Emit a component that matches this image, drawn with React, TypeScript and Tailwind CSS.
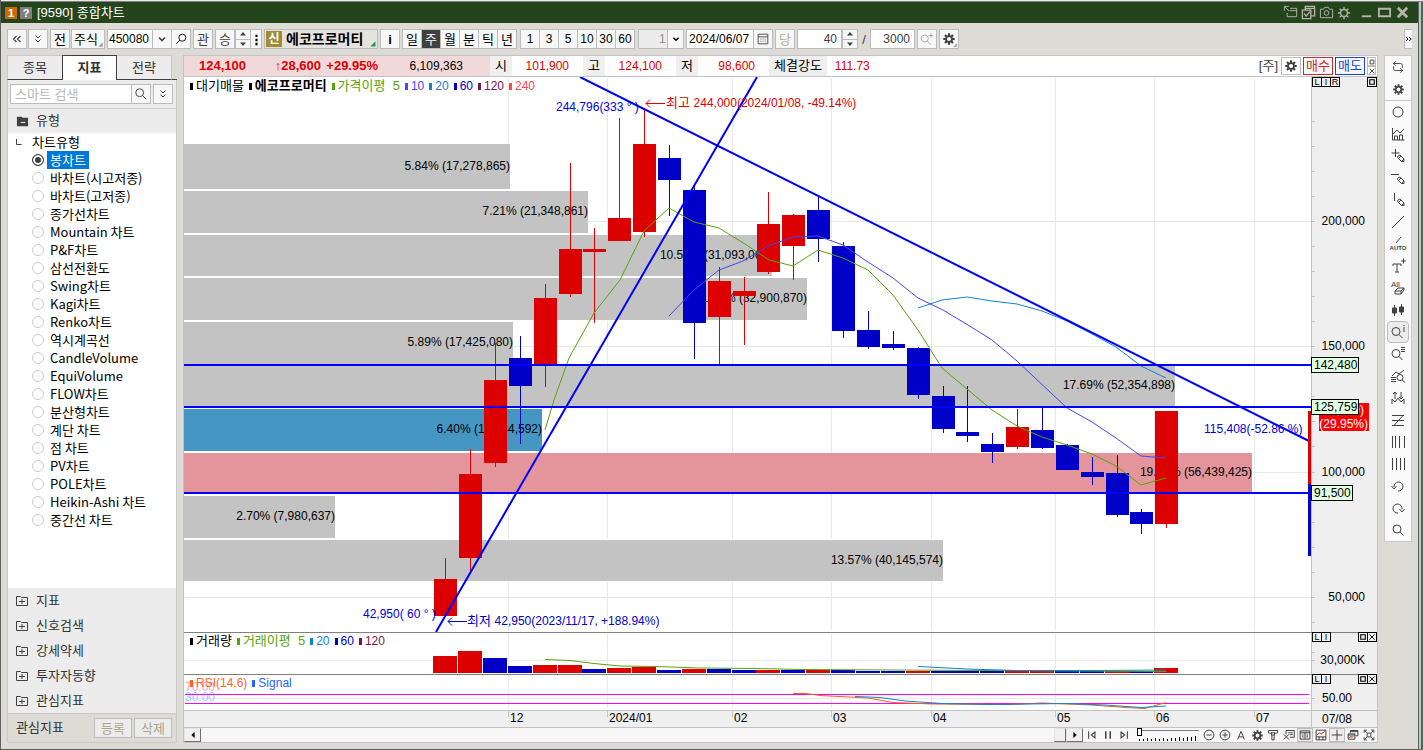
import { useState, type ReactNode } from "react";
import clsx from "clsx";

type IconProps = { d: string; size?: number; w?: number; className?: string; children?: ReactNode };

// 16x16 line icon
const Icon = ({ d, size = 16, w = 1, className, children }: IconProps) => (
  <svg
    width={size}
    height={size}
    viewBox="0 0 16 16"
    fill="none"
    stroke="currentColor"
    strokeWidth={w}
    className={clsx("shrink-0 overflow-visible", className)}
    aria-hidden
  >
    <path d={d} />
    {children}
  </svg>
);

const Gear = ({ size = 16, className }: { size?: number; className?: string }) => (
  <Icon d="M8 1.5v3M8 11.5v3M1.5 8h3M11.5 8h3M3.4 3.4l2 2M10.6 10.6l2 2M12.6 3.4l-2 2M5.4 10.6l-2 2" w={2.4} size={size} className={className}>
    <circle cx="8" cy="8" r="3.4" strokeWidth="2" />
  </Icon>
);

const PENCIL = "M8 8l2-1 4 4v2.500h-2.500l-4-4zM9 10l2-2M11.500 13.500l2.500-2.500";
const CHEVRON = "M5 6.500l3 3 3-3";
const DOUBLE_DOWN = "M5.500 4.500l2.500 2.500 2.500-2.500M5.500 8.500l2.500 2.500 2.500-2.500";
const MAG = "M10 10l4 4";

const box = "h-5 flex items-center justify-center bg-[#f7f7f7] border border-[#bcbcbc] shrink-0";

const chartTypes = [
  "봉차트",
  "바차트(시고저종)",
  "바차트(고저종)",
  "종가선차트",
  "Mountain 차트",
  "P&F차트",
  "삼선전환도",
  "Swing차트",
  "Kagi차트",
  "Renko차트",
  "역시계곡선",
  "CandleVolume",
  "EquiVolume",
  "FLOW차트",
  "분산형차트",
  "계단 차트",
  "점 차트",
  "PV차트",
  "POLE차트",
  "Heikin-Ashi 차트",
  "중간선 차트",
];

const categories = ["지표", "신호검색", "강세약세", "투자자동향", "관심지표"];

const Spinner = ({ label }: { label: string }) => (
  <div className="flex flex-col w-4 h-5 shrink-0 border border-[#bcbcbc] bg-[#f7f7f7] text-[#404040]">
    {["M8 4l6 7h-12z", "M8 12l6-7h-12z"].map((d, i) => (
      <button
        key={d}
        type="button"
        aria-label={`${label} ${i === 0 ? "+" : "-"}`}
        className={clsx("flex-1 flex items-center justify-center", i === 1 && "border-t border-[#bcbcbc]")}
      >
        <svg width="8" height="8" viewBox="0 0 16 16" fill="currentColor" aria-hidden>
          <path d={d} />
        </svg>
      </button>
    ))}
  </div>
);

const TitleBar = () => (
  <header className="h-[21px] bg-[#24451c] flex items-center justify-between pl-1 pr-2 text-white">
    <div className="flex items-center gap-[3px]">
      <span className="w-3 h-3 bg-[#c86a00] text-[11px] leading-3 font-bold text-center">1</span>
      <button type="button" className="w-3 h-3 bg-[#808080] text-[11px] leading-3 font-bold text-center">
        ?
      </button>
      <h1 className="text-[13px] leading-5 ml-[2px]">[9590] 종합차트</h1>
    </div>
    <div className="flex items-center gap-[3px] text-[#b4b4a8]">
      <button type="button" aria-label="이동">
        <Icon d="M1.500 6v-4.500h4.500M1.500 1.500l5 5M7.500 3.500h7v9h-10v-4M7 6h7.500" size={15} />
      </button>
      <button type="button" aria-label="복사">
        <Icon d="M1.500 5.500h9v9h-9zM4.500 5v-3.500h10v10h-4M4.500 3.500h10M3.500 9l2 3 4-5" size={15} w={1.4} />
      </button>
      <button type="button" aria-label="캡처">
        <Icon d="M1.500 4.500h3.500l1-2h4l1 2h3.500v9h-13z" size={15}>
          <circle cx="8" cy="8.500" r="2.500" />
        </Icon>
      </button>
      <button type="button" aria-label="설정">
        <Icon d="M8 1v2.500M8 12.500v2.500M1 8h2.500M12.500 8h2.500M3 3l2 2M11 11l2 2M13 3l-2 2M5 11l-2 2" size={14} w={1.6}>
          <circle cx="8" cy="8" r="4" />
        </Icon>
      </button>
      <button type="button" aria-label="최소화" className="ml-[5px]">
        <Icon d="M3 12h10" size={15} w={2} />
      </button>
      <button type="button" aria-label="최대화">
        <Icon d="M2 4h12v8h-12z" size={15} w={2} />
      </button>
      <button type="button" aria-label="닫기">
        <Icon d="M3 3l10 10M13 3l-10 10" size={15} w={3} />
      </button>
    </div>
  </header>
);

const Toolbar = () => {
  const [period, setPeriod] = useState("주");
  return (
    <div className="flex items-center justify-between py-[6px] px-[6px]">
      <div className="flex items-center gap-[2px] text-[13px] leading-none text-black">
        <div className="flex gap-px">
          <button type="button" aria-label="이전" className={clsx(box, "w-5 text-[#404040]")}>
            <Icon d="M7.500 5l-3 3 3 3M11.500 5l-3 3 3 3" w={1.2} />
          </button>
          <button type="button" aria-label="펼치기" className={clsx(box, "w-5 text-[#404040]")}>
            <Icon d={DOUBLE_DOWN} />
          </button>
        </div>
        <div className="flex gap-px">
          <button type="button" className={clsx(box, "w-5")}>전</button>
          <button type="button" className={clsx(box, "w-[34px] relative pr-1")}>
            주식
            <Icon d="M12 2v10h-10z" size={6} className="absolute right-0 bottom-0 text-[#999] fill-[#999]" />
          </button>
        </div>
        <div className="flex">
          <input aria-label="종목코드" defaultValue="450080" className="w-[46px] h-5 bg-white border border-[#bcbcbc] px-px text-[12px]" />
          <button type="button" aria-label="종목 목록" className={clsx(box, "w-5 -ml-px")}>
            <Icon d={CHEVRON} w={1.6} className="text-[#404040]" />
          </button>
          <button type="button" aria-label="종목 검색" className={clsx(box, "w-5 -ml-px")}>
            <Icon d="M6.500 9.500l-4 4" size={14}>
              <circle cx="9.500" cy="6.500" r="4" />
            </Icon>
          </button>
        </div>
        <button type="button" className={clsx(box, "w-5 text-[#404040]")}>관</button>
        <div className="flex">
          <button type="button" className={clsx(box, "w-5 text-[#404040]")}>승</button>
          <Spinner label="종목" />
          <button type="button" aria-label="더보기" className={clsx(box, "w-3 -ml-px")}>
            <Icon d="M8 2v3M8 7v3M8 12v3" w={2.6} size={13} />
          </button>
        </div>
        <button type="button" className="h-5 w-[114px] flex items-center gap-1 pl-px bg-[#e4e3df] border border-[#bcbcbc] font-bold text-[14px] relative">
          <span className="w-4 h-4 leading-4 bg-[#a08c32] text-white text-[12px]">신</span>
          에코프로머티
          <Icon d="M14 2v12h-12z" size={6} className="absolute right-px bottom-px text-[#14a050] fill-[#14a050]" />
        </button>
        <button type="button" className={clsx(box, "w-5 font-bold")}>i</button>
        <div className="flex">
          {["일", "주", "월", "분", "틱", "년"].map((p) => (
            <button
              key={p}
              type="button"
              onClick={() => setPeriod(p)}
              className={clsx(
                "h-5 w-5 -mr-px border border-[#bcbcbc] flex items-center justify-center",
                p === period ? "bg-[#404040] text-white" : "bg-[#f7f7f7]"
              )}
            >
              {p}
            </button>
          ))}
        </div>
        <div className="flex ml-[2px] text-[12px]">
          {["1", "3", "5", "10", "30", "60"].map((m) => (
            <button key={m} type="button" className={clsx(box, "w-5 -mr-px")}>
              {m}
            </button>
          ))}
        </div>
        <div className="relative ml-[2px]">
          <select aria-label="주기" className="appearance-none block w-[46px] h-5 border border-[#bcbcbc] bg-[#ececec] text-[12px] leading-4 text-[#909090] pl-5">
            <option>1</option>
          </select>
          <span className="absolute right-0 top-0 w-[17px] h-5 bg-[#f7f7f7] border border-[#bcbcbc] flex items-center justify-center pointer-events-none">
            <Icon d={CHEVRON} w={1.6} size={14} />
          </span>
        </div>
        <div className="flex">
          <input aria-label="날짜" defaultValue="2024/06/07" className="w-[68px] h-5 bg-white border border-[#bcbcbc] px-[2px] text-[12px]" />
          <button type="button" aria-label="달력" className={clsx(box, "w-5 -ml-px text-[#404040]")}>
            <Icon d="M2.500 2.500h11v11h-11zM2.500 5.500h11M5 8h1M7.500 8h1M10 8h1M5 10.500h1M7.500 10.500h1M10 10.500h1" size={14} />
          </button>
        </div>
        <button type="button" className={clsx(box, "w-5 text-[#b4b0a0]")}>당</button>
        <div className="flex">
          <input aria-label="표시 개수" defaultValue="40" className="w-[45px] h-5 bg-white border border-[#bcbcbc] px-1 text-right text-[12px] text-[#404040]" />
          <Spinner label="개수" />
        </div>
        <span className="w-2 text-center text-[#404040]">/</span>
        <input aria-label="전체 개수" defaultValue="3000" className="w-[45px] h-5 bg-white border border-[#bcbcbc] px-1 text-right text-[12px] text-[#404040]" />
        <button type="button" aria-label="확대 조회" className={clsx(box, "w-5 text-[#a0a0a0]")}>
          <Icon d="M8.500 10.500l4 4M10 4h5M12.500 1.500v5" size={14}>
            <circle cx="5.500" cy="7.500" r="4" />
          </Icon>
        </button>
        <button type="button" aria-label="차트 설정" className={clsx(box, "w-5 relative text-[#404040]")}>
          <Gear size={14} />
          <Icon d="M12 2v10h-10z" size={5} className="absolute right-0 bottom-0 text-[#999] fill-[#999]" />
        </button>
      </div>
      <button type="button" aria-label="도구 펼치기" className="w-2 h-5 border border-r-0 border-[#bcbcbc] bg-[#f7f7f7] flex items-center justify-center">
        <Icon d="M3.500 5l3 3-3 3M8.500 5l3 3-3 3" size={10} w={1.6} />
      </button>
    </div>
  );
};

const Sidebar = () => {
  const [type, setType] = useState("봉차트");
  return (
    <aside className="w-[170px] shrink-0 flex flex-col text-[13px] text-[#333]">
      <div className="flex h-[25px]">
        <button type="button" className="w-[55px] bg-[#ececec] border border-r-0 border-[#c8c8c8] border-b-[#404040]">종목</button>
        <button type="button" className="w-[55px] bg-white border border-b-0 border-[#404040] font-bold">지표</button>
        <button type="button" className="w-[55px] bg-[#ececec] border border-l-0 border-[#c8c8c8] border-b-[#404040]">전략</button>
        <span className="flex-1 border-b border-[#404040]" />
      </div>
      <div className="flex-1 flex flex-col border border-t-0 border-[#c8c8c8]">
        <div className="h-7 bg-[#ececec] flex items-center pl-[2px] pr-[3px]">
          <input aria-label="스마트 검색" placeholder="스마트 검색" className="w-[122px] h-5 bg-white border border-[#bcbcbc] px-1 placeholder:text-[#b8b8b8]" />
          <button type="button" aria-label="검색" className={clsx(box, "w-5 -ml-px")}>
            <Icon d={MAG} size={14}>
              <circle cx="6.500" cy="6.500" r="4.500" />
            </Icon>
          </button>
          <button type="button" aria-label="펼치기" className={clsx(box, "w-5 ml-[2px]")}>
            <Icon d={DOUBLE_DOWN} />
          </button>
        </div>
        <button type="button" className="h-[25px] bg-[#ececec] border-t border-[#d0d0d0] flex items-center gap-[7px] pl-2">
          <svg width="13" height="13" viewBox="0 0 14 14" aria-hidden>
            <path d="M1 2h5l1 1h6v9h-12z" fill="#404040" />
            <path d="M5 8h5" stroke="#fff" />
          </svg>
          유형
        </button>
        <div className="flex-1 bg-white text-black font-['Noto_Sans_CJK_KR',sans-serif]">
          <div className="h-[18px] flex items-center pl-2 gap-[10px]">
            <svg width="6" height="6" aria-hidden>
              <path d="M.5 0v5.500h5" stroke="#404040" fill="none" />
            </svg>
            차트유형
          </div>
          {chartTypes.map((t) => (
            <label key={t} className="h-[18px] flex items-center pl-6 gap-[3px]">
              <input
                type="radio"
                name="chartType"
                checked={t === type}
                onChange={() => setType(t)}
                className="appearance-none m-0 w-3 h-3 rounded-full border border-[#ccc] checked:border-[#404040] checked:bg-[#404040] checked:shadow-[inset_0_0_0_2px_white]"
              />
              <span className={clsx("px-[3px] leading-[18px]", t === type && "bg-[#0078d7] text-white")}>{t}</span>
            </label>
          ))}
        </div>
        <div className="bg-[#ececec] flex flex-col">
          {categories.map((c) => (
            <button key={c} type="button" className="h-[25px] flex items-center gap-2 pl-2">
              <svg width="12" height="12" viewBox="0 0 12 12" fill="none" stroke="#404040" aria-hidden>
                <path d="M.5 1.500h4l1 1h6v8h-11zM3 6.500h6M6 4v5" />
              </svg>
              {c}
            </button>
          ))}
        </div>
        <div className="h-[29px] border-t border-[#c8c8c8] bg-[#dcdbd5] flex items-center gap-[2px] pl-2 pr-1">
          <span className="flex-1">관심지표</span>
          <button type="button" className="w-[38px] h-5 bg-[#ececec] border border-[#bcbcbc] text-[#a8a490] leading-none">등록</button>
          <button type="button" className="w-[38px] h-5 bg-[#ececec] border border-[#bcbcbc] text-[#a8a490] leading-none">삭제</button>
        </div>
      </div>
    </aside>
  );
};

const QuoteCell = ({ label, value, last }: { label: string; value: string; last?: boolean }) => (
  <>
    <span className="bg-[#efefef] text-black text-[13px] px-[5px] min-w-[22px] text-center">{label}</span>
    <span className={clsx("text-[#dd0000]", last ? "pl-2" : "min-w-[71px] text-right pr-[14px]")}>{value}</span>
  </>
);

const QuoteBar = () => (
  <div className="h-[21px] border-b border-[#c3c3c3] bg-white flex justify-between text-[12px] leading-5">
    <div className="flex">
      <div className="bg-[#f2d9d9] w-[306px] flex text-[#dd0000]">
        <b className="w-[62px] text-right text-[13px]">124,100</b>
        <b className="w-[75px] text-right text-[13px]">↑28,600</b>
        <b className="w-[57px] text-right text-[13px]">+29.95%</b>
        <span className="w-[85px] text-right text-black">6,109,363</span>
      </div>
      <QuoteCell label="시" value="101,900" />
      <QuoteCell label="고" value="124,100" />
      <QuoteCell label="저" value="98,600" />
      <QuoteCell label="체결강도" value="111.73" last />
    </div>
    <div className="flex items-center gap-[2px] pr-px text-[#404040]">
      <span className="text-[13px]">[주]</span>
      <button type="button" aria-label="설정" className="w-5 h-[18px] ml-px border border-[#bcbcbc] flex items-center justify-center">
        <Gear size={14} />
      </button>
      <button type="button" className="w-[30px] h-[18px] border border-[#d02828] text-[#d02828] text-[13px] leading-4 bg-[#f7f7f7]">매수</button>
      <button type="button" className="w-[30px] h-[18px] border border-[#1c46d2] text-[#1c46d2] text-[13px] leading-4 bg-[#f7f7f7]">매도</button>
      <div className="flex flex-col">
        <button type="button" aria-label="최대화" className="w-[9px] h-[9px] border border-[#bcbcbc] flex items-center justify-center">
          <Icon d="M3 3h10v10h-10z" size={6} w={2.6} />
        </button>
        <button type="button" aria-label="닫기" className="w-[9px] h-[9px] border border-[#bcbcbc] flex items-center justify-center">
          <Icon d="M2 2l12 12M14 2l-12 12" size={6} w={2.6} />
        </button>
      </div>
    </div>
  </div>
);

const RED = "#dd0000";
const BLUE = "#0000c8";

// x, body top, body bottom, high, low, colour
const candles: [number, number, number, number, number, string][] = [
  [434, 579, 616, 558, 616, RED],
  [459, 474, 558, 449, 571, RED],
  [484, 380, 463, 343, 467, RED],
  [509, 358, 386, 336, 444, BLUE],
  [534, 298, 365, 284, 387, RED],
  [559, 249, 294, 163, 297, RED],
  [583, 249, 252, 228, 323, RED],
  [608, 218, 241, 118, 241, RED],
  [633, 144, 232, 109, 237, RED],
  [658, 158, 180, 145, 216, BLUE],
  [683, 190, 323, 186, 359, BLUE],
  [708, 281, 317, 267, 364, RED],
  [733, 291, 296, 277, 345, RED],
  [757, 224, 272, 192, 274, RED],
  [782, 215, 246, 214, 280, RED],
  [807, 210, 239, 196, 262, BLUE],
  [832, 246, 331, 242, 338, BLUE],
  [857, 330, 347, 311, 349, BLUE],
  [882, 344, 348, 331, 350, BLUE],
  [907, 348, 395, 347, 399, BLUE],
  [932, 396, 429, 386, 433, BLUE],
  [956, 432, 436, 386, 442, BLUE],
  [981, 444, 452, 433, 463, BLUE],
  [1006, 427, 447, 409, 449, RED],
  [1031, 430, 448, 407, 449, BLUE],
  [1056, 445, 470, 444, 470, BLUE],
  [1081, 472, 477, 457, 485, BLUE],
  [1106, 473, 515, 455, 517, BLUE],
  [1130, 512, 524, 509, 534, BLUE],
  [1155, 411, 524, 411, 528, RED],
];

const profile: [number, number, number, string, string][] = [
  [144, 189, 510, "5.84% (17,278,865)", "#c3c3c3"],
  [191, 233, 588, "7.21% (21,348,861)", "#c3c3c3"],
  [235, 276, 772, "10.51% (31,093,064)", "#c3c3c3"],
  [278, 320, 807, "11.12% (32,900,870)", "#c3c3c3"],
  [322, 364, 513, "5.89% (17,425,080)", "#c3c3c3"],
  [366, 406, 1175, "17.69% (52,354,898)", "#c3c3c3"],
  [409, 451, 542, "6.40% (18,934,592)", "#4696c4"],
  [453, 492, 1252, "19.07% (56,439,425)", "#e4949b"],
  [496, 538, 335, "2.70% (7,980,637)", "#c3c3c3"],
  [540, 581, 943, "13.57% (40,145,574)", "#c3c3c3"],
];

const volumes: [number, string][] = [
  [656, RED],
  [651, RED],
  [658, BLUE],
  [666, BLUE],
  [665, RED],
  [665, RED],
  [669, BLUE],
  [668, RED],
  [667, RED],
  [670, BLUE],
  [669, RED],
  [669, BLUE],
  [670, BLUE],
  [670, RED],
  [670, BLUE],
  [670, RED],
  [670, BLUE],
  [671, BLUE],
  [671, BLUE],
  [671, RED],
  [671, BLUE],
  [671, BLUE],
  [671, BLUE],
  [670, RED],
  [670, RED],
  [671, BLUE],
  [671, BLUE],
  [671, RED],
  [671, BLUE],
  [668, RED],
];

const months: [number, string][] = [
  [508, "12"],
  [607, "2024/01"],
  [732, "02"],
  [831, "03"],
  [931, "04"],
  [1055, "05"],
  [1154, "06"],
  [1254, "07"],
];

const prices: [number, string][] = [
  [221, "200,000"],
  [346, "150,000"],
  [472, "100,000"],
  [597, "50,000"],
];

const ma5 =
  "545,430 554,400 569,358 594,313 620,280 644,231 669,208 694,222 719,228 745,244 769,260 793,266 818,250 843,258 868,270 893,295 918,330 942,368 967,389 992,410 1017,426 1042,437 1067,445 1092,454 1116,466 1141,485 1166,478";
const ma10 =
  "669,316 694,290 719,270 743,261 768,246 793,237 818,236 843,245 868,262 893,278 918,298 943,310 968,325 992,340 1017,361 1067,408 1092,422 1116,438 1141,456 1166,458";
const ma20 =
  "918,308 942,300 967,297 992,301 1017,304 1042,311 1067,321 1092,334 1116,347 1141,366 1166,378";

const Grid = ({ top, bottom, rows }: { top: number; bottom: number; rows: number[] }) => (
  <g stroke="#e8e8e8" shapeRendering="crispEdges">
    {months.map(([x]) => (
      <path key={x} d={`M${x + 0.5} ${top + 1}V${bottom - 2}`} />
    ))}
    {rows.map((y) => (
      <path key={y} d={`M185 ${y + 0.5}H1311`} />
    ))}
  </g>
);

const Axis = ({ top, bottom, ticks }: { top: number; bottom: number; ticks: number[] }) => (
  <g shapeRendering="crispEdges">
    <rect x="1311" y={top} width="66" height={bottom - top} fill="#efefef" />
    <path d={`M1311.500 ${top}V${bottom}`} stroke="#c3c3c3" />
    {ticks.map((y) => (
      <path key={y} d={`M1312 ${y + 0.5}h3`} stroke="#c3c3c3" />
    ))}
  </g>
);

const Legend = ({ items }: { items: [string, string, boolean?][] }) => (
  <div className="absolute left-[6px] top-px flex gap-[5px] text-[12px] leading-4">
    {items.map(([text, color, bold]) => (
      <span
        key={text}
        style={{ color }}
        className={clsx("flex items-center gap-[3px] whitespace-pre", /[가-힣]/.test(text) && "text-[13px]", bold && "font-bold")}
      >
        <i style={{ backgroundColor: color }} className="w-[3px] h-[7px]" />
        {text}
      </span>
    ))}
  </div>
);

const tiny = "w-[10px] h-[10px] -mr-px border border-black text-[9px] leading-[8px] flex items-center justify-center text-black";

const PaneButtons = ({ left, close }: { left: string[]; close?: boolean }) => (
  <div className="absolute right-0 top-0 w-[65px] flex justify-between pr-px">
    <div className="flex">
      {left.map((l) => (
        <button key={l} type="button" className={tiny}>
          {l}
        </button>
      ))}
    </div>
    <div className="flex">
      <button type="button" aria-label="창 최대화" className={tiny}>
        <Icon d="M2 2h12v12h-12z" size={6} w={3} />
      </button>
      {close && (
        <button type="button" aria-label="창 닫기" className={tiny}>
          <Icon d="M1 1l14 14M15 1l-14 14" size={6} w={2.4} />
        </button>
      )}
    </div>
  </div>
);

const PriceTag = ({ y, w, text }: { y: number; w: number; text: string }) => (
  <g>
    <rect x="1311.500" y={y - 7.5} width={w} height="15" fill="#e2ffe2" stroke="#000" />
    <text x="1314" y={y + 4}>
      {text}
    </text>
  </g>
);

const PricePane = () => (
  <div className="relative">
    <svg viewBox="184 77 1193 555" className="block w-full h-auto text-[12px]" role="img" aria-label="가격 차트">
      <Grid top={77} bottom={632} rows={prices.map((p) => p[0])} />
      <g shapeRendering="crispEdges">
        {profile.map(([top, bottom, x, , fill]) => (
          <rect key={top} x="184" y={top} width={x - 184} height={bottom - top} fill={fill} stroke="#fff" strokeWidth="2" paintOrder="stroke" />
        ))}
      </g>
      {profile.map(([top, bottom, x, text]) => (
        <text key={top} x={x} y={Math.round((top + bottom) / 2) + 3} textAnchor="end">
          {text}
        </text>
      ))}
      <g shapeRendering="crispEdges">
        {candles.map(([x, top, bottom, high, low, fill]) => (
          <g key={x} fill={fill}>
            <rect x={x + 11} y={high} width="1" height={low - high} />
            <rect x={x} y={top} width="23" height={bottom - top} />
          </g>
        ))}
      </g>
      <g fill="none">
        <polyline points={ma5} stroke="#56a40a" />
        <polyline points={ma10} stroke="#4646f0" />
        <polyline points={ma20} stroke="#1482d2" />
      </g>
      <g stroke="#0000ff" strokeWidth="2">
        <path d="M184 365H1311M184 407H1311M184 493H1311" />
        <path d="M580 77L1311 442M436 632L757 77" />
      </g>
      <g fill="#0000dd">
        <text x="556" y="111">244,796(333 ° )</text>
        <text x="1204" y="433">115,408(-52.86 %)</text>
        <text x="363" y="618">42,950( 60 ° )</text>
      </g>
      <path d="M665 103.500h-19M650 99.500l-4 4 4 4" stroke={RED} fill="none" />
      <text x="666" y="107" fill={RED}>
        <tspan className="text-[13px]">최고 </tspan>
        244,000(2024/01/08, -49.14%)
      </text>
      <path d="M467 621.500h-19M452 617.500l-4 4 4 4" stroke={BLUE} fill="none" />
      <text x="467" y="625" fill={BLUE}>
        <tspan className="text-[13px]">최저 </tspan>
        42,950(2023/11/17, +188.94%)
      </text>
      <Axis top={77} bottom={632} ticks={[121, 146, 171, 196, 221, 246, 271, 296, 321, 346, 371, 396, 421, 446, 472, 497, 522, 547, 572, 597, 622]} />
      <rect x="1308" y="411" width="3" height="73" fill={RED} />
      <rect x="1308" y="484" width="3" height="72" fill={BLUE} />
      {prices.map(([y, text]) => (
        <text key={y} x="1365" y={y + 4} textAnchor="end">
          {text}
        </text>
      ))}
      <rect x="1319" y="403" width="50" height="28" fill="#ff0000" />
      <g fill="#fff">
        <text x="1364" y="414" textAnchor="end">(124,100)</text>
        <text x="1368" y="428" textAnchor="end">(29.95%)</text>
      </g>
      <PriceTag y={365} w={47} text="142,480" />
      <PriceTag y={407} w={47} text="125,759" />
      <PriceTag y={493} w={41} text="91,500" />
    </svg>
    <Legend
      items={[
        ["대기매물", "#000"],
        ["에코프로머티", "#000", true],
        ["가격이평  5", "#56a40a"],
        ["10", "#4646ff"],
        ["20", "#1482d2"],
        ["60", BLUE],
        ["120", "#781450"],
        ["240", "#ff4646"],
      ]}
    />
    <PaneButtons left={["L", "I", "R"]} />
  </div>
);

const VolumePane = () => (
  <div className="relative">
    <svg viewBox="184 632 1193 42" className="block w-full h-auto text-[12px]" role="img" aria-label="거래량 차트">
      <Grid top={633} bottom={674} rows={[660]} />
      <g shapeRendering="crispEdges">
        {volumes.map(([top, fill], i) => (
          <rect key={i} x={candles[i][0] - 1} y={top} width="24" height={673 - top} fill={fill} />
        ))}
      </g>
      <g fill="none">
        <polyline points="545,659.500 570,660.500 594,663.500 620,666 656,666.500 700,668 756,668.500 800,669.500 1166,671.500" stroke="#56a40a" />
        <polyline points="918,666.500 967,669 1017,670.500 1100,670.500 1166,670" stroke="#1482d2" />
      </g>
      <Axis top={632} bottom={674} ticks={[652, 660]} />
      <text x="1365" y="664" textAnchor="end">30,000K</text>
      <path d="M184 632.500H1377" stroke="#808080" />
    </svg>
    <Legend
      items={[
        ["거래량", "#000"],
        ["거래이평  5", "#56a40a"],
        ["20", "#1482d2"],
        ["60", BLUE],
        ["120", "#781450"],
      ]}
    />
    <PaneButtons left={["L", "I"]} close />
  </div>
);

const RsiPane = () => (
  <div className="relative">
    <svg viewBox="184 674 1193 36" className="block w-full h-auto text-[12px]" role="img" aria-label="RSI 차트">
      <Grid top={675} bottom={710} rows={[698]} />
      <text x="185" y="691" fill="#ff96c8">70.00</text>
      <text x="185" y="701" fill="#96c8ff">30.00</text>
      <path d="M185 694.500H1309M185 703.500H1309" stroke="#ff00ff" />
      <g fill="none">
        <polyline points="793,693.500 806,693.500 820,695.500 868,698 893,702.500 932,704 1010,704.500 1042,703 1092,705 1125,707.500 1145,708.500 1166,702.500" stroke="#f06414" />
        <polyline points="855,696.500 880,697.500 905,701 942,703.500 992,704.500 1067,703.500 1105,705 1141,707.500 1166,706" stroke="#1482d2" />
      </g>
      <Axis top={674} bottom={710} ticks={[698]} />
      <text x="1322" y="702">50.00</text>
      <path d="M184 674.500H1377" stroke="#808080" />
    </svg>
    <Legend
      items={[
        ["RSI(14,6)", "#ff641e"],
        ["Signal", "#2864ff"],
      ]}
    />
    <PaneButtons left={["L", "I"]} close />
  </div>
);

const TimeAxis = () => (
  <svg viewBox="184 710 1193 18" className="block w-full h-auto text-[12px]" role="img" aria-label="날짜 축">
    <rect x="184" y="710" width="1193" height="18" fill="#efefef" />
    <path d="M184 710.500H1377M184 727.500H1377M1311.500 710V728" stroke="#c3c3c3" />
    {months.map(([x, text]) => (
      <g key={x}>
        <path d={`M${x + 0.5} 711v6`} stroke="#c3c3c3" />
        <text x={x + 2} y="722">
          {text}
        </text>
      </g>
    ))}
    <text x="1322" y="723">07/08</text>
  </svg>
);

const bottomTools: [string, string, boolean?][] = [
  ["축소", "M4.500 8h7M8 1.500a6.500 6.500 0 100 13 6.500 6.500 0 000-13"],
  ["확대", "M4.500 8h7M8 4.500v7M8 1.500a6.500 6.500 0 100 13 6.500 6.500 0 000-13"],
  ["글자", "M3.500 14l4.500-11 4.500 11M5 10.500h6"],
  ["설정", ""],
  ["도구", "M2 5v-3h12v3M5 5h6M6 5v3h4v-3M6.500 8v6.500h3v-6.500M2 5l3 1M11 6l3-1"],
  ["삭제", "M4 7v-5h11v9h-6M7 5h6M9 7.500h4M1 7l7 7M8 7l-7 7"],
  ["목록", "M1.500 2.500h13v11h-13zM1.500 5h13M8 5v8M4 8h2M4 10.500h2M10 8h2M10 10.500h2", true],
  ["차트", "M1.500 1.500h13v13h-13zM1.500 10.500h13M5.500 10.500v4M10.500 10.500v4"],
  ["십자선", "M8 1v14M1 8h14", true],
  ["창", "M4.500 5v-3h10v7h-3M1.500 6.500h9v7h-9zM4.500 3.500h10M1.500 8h9"],
  ["전체", "M5.500 5.500h5v5h-5zM1.500 5v-3.500h3.500M11 1.500h3.500v3.500M14.500 11v3.500h-3.500M5 14.500h-3.500v-3.500M2 2l3 3M14 2l-3 3M14 14l-3-3M2 14l3-3"],
];

const scrollButton = "h-[14px] bg-[#f0f0f0] border border-[#e4e4e4] border-r-[#707070] border-b-[#707070] flex items-center justify-center text-black";

const BottomBar = () => (
  <div className="h-[14px] flex items-center bg-[#f7f7f7] text-[#404040]">
    <button type="button" aria-label="왼쪽" className={clsx(scrollButton, "w-[17px]")}>
      <Icon d="M10 4l-4 4 4 4z" size={10} className="fill-black" />
    </button>
    <div className="flex-1 h-full bg-[#f6f6f6] flex justify-end">
      <button type="button" aria-label="스크롤" className={clsx(scrollButton, "w-3")} />
    </div>
    <button type="button" aria-label="오른쪽" className={clsx(scrollButton, "w-[17px]")}>
      <Icon d="M6 4l4 4-4 4z" size={10} className="fill-black" />
    </button>
    <div className="flex items-center gap-[4px] pl-[3px]">
      <button type="button" aria-label="처음">
        <Icon d="M3.500 3v10M12 4l-5 4 5 4z" size={12} w={1.4} />
      </button>
      <button type="button" aria-label="정지">
        <Icon d="M5 3v10M11 3v10" size={12} w={2} />
      </button>
      <button type="button" aria-label="끝">
        <Icon d="M12.500 3v10M4 4l5 4-5 4z" size={12} w={1.4} />
      </button>
    </div>
    <div className="relative w-[62px] h-[14px] ml-[7px]">
      <svg viewBox="0 0 62 14" className="w-full h-full" aria-hidden>
        <path d="M4 2.500h58" stroke="#808080" />
        <path d="M2.500 11v2M6.500 11v2M10.500 10v3M14.500 11v2M18.500 10v3M22.500 11v2M26.500 10v3M30.500 11v2M34.500 10v3M38.500 10v3M42.500 9v4M46.500 10v3M50.500 9v4M54.500 9v4M58.500 8v5" stroke="#000" />
      </svg>
      <input
        type="range"
        aria-label="배율"
        defaultValue={0}
        className="absolute inset-0 w-full h-2 appearance-none bg-transparent [&::-webkit-slider-thumb]:appearance-none [&::-webkit-slider-thumb]:w-[5px] [&::-webkit-slider-thumb]:h-2 [&::-webkit-slider-thumb]:border [&::-webkit-slider-thumb]:border-black [&::-webkit-slider-thumb]:bg-white"
      />
    </div>
    <div className="flex items-center pl-[2px]">
      {bottomTools.map(([label, d, on]) => (
        <button
          key={label}
          type="button"
          aria-label={label}
          className={clsx("w-4 h-[14px] flex items-center justify-center", on && "bg-[#ececec] border border-[#bcbcbc]")}
        >
          {d ? (
            <Icon d={d} size={12} w={1.3}>
              {label === "차트" && <path d="M3 8l3-3 2 2 5-4" stroke="#c81e1e" />}
              {label === "창" && <path d="M3 12l2-2 2 1 2-2" stroke="#c81e1e" />}
            </Icon>
          ) : (
            <Gear size={13} />
          )}
        </button>
      ))}
    </div>
  </div>
);

const MAG_CIRCLE = "M6 3.500a4 4 0 100 8 4 4 0 000-8M9 10.500l3.500 3.500";

const sideTools: [string, string, string?][] = [
  ["원", "M8 3a5 5 0 100 10 5 5 0 000-10"],
  ["지표 추가", "M2.500 2v12h12M4.500 14v-4h3v4M9.500 14v-5h3v5M3 8l4-4 3 3 4-4"],
  ["십자 그리기", `M5.500 1v8M1.500 5h8${PENCIL}`],
  ["수평선", `M1 4.500h8${PENCIL}`],
  ["수직선", `M4.500 1v8${PENCIL}`],
  ["추세선", "M2 14L14 2"],
  ["자동 추세선", "M6 7l5-6", "AUTO"],
  ["텍스트", "M3 8v-2h8v2M7 6v8M5 14h4M11 3h5M13.500 .5v5"],
  ["모두 지우기", "M5 11l3-3h6v2l-3 4h-6zM5 11h6l3-3M11 11v3", "All"],
  ["봉", "M4.500 3v11M11.500 2v11"],
  ["정보 조회", `${MAG_CIRCLE}M14 1v1M14 3v5`],
  ["목록 조회", `${MAG_CIRCLE}M11 1.500h4M11 3.500h4M11 5.500h4`],
  ["차트 조회", "M2 8l4-4 3 2 5-4M1 9.500h5M1 11.500h5M1 13.500h5M10 6.500a3 3 0 100 6 3 3 0 000-6M12 12l3 2.500"],
  ["신호", "M2 14v-5l3 3 3-4 3 4 3-3v5M5 9v-7M3 4l2-2 2 2M11 2v7M9 7l2 2 2-2"],
  ["되돌림", "M2 3.500h12M2 8.500h12M2 13.500h12M13 3.500L4 13.500"],
  ["피보나치", "M2.500 2v12M5.500 2v12M9.500 2v12M14.500 2v12"],
  ["등간격", "M2.500 2v12M6.500 2v12M10.500 2v12M14.500 2v12"],
  ["실행 취소", "M4 9a4.500 4.500 0 114 4M1.500 8l2.500 3 2.500-3"],
  ["다시 실행", "M12 9a4.500 4.500 0 10-4 4M9.500 9l2.500 3 2.500-3"],
  ["돋보기", "M7 3a4 4 0 100 8 4 4 0 000-8M10 10l3.500 3.500"],
];

const SideTools = () => (
  <nav className="w-7 shrink-0 self-start bg-[#fafafa] border border-[#c8c8c8] flex flex-col items-center text-[#404040]">
    <div className="w-full flex flex-col items-center border-b border-[#c8c8c8]">
      <button type="button" aria-label="새로고침" className="h-[22px] flex items-center">
        <Icon d="M5.500 1.500l-3 2.500 3 2.500M2.500 4h8.500a2 2 0 012 2v3M10.500 9.500l3 2.500-3 2.500M13.500 12h-8.500a2 2 0 01-2-2v-3" size={14} />
      </button>
      <button type="button" aria-label="도구 설정" className="h-[22px] flex items-center">
        <Gear size={13} />
      </button>
    </div>
    {sideTools.map(([label, d, text]) => (
      <button
        key={label}
        type="button"
        aria-label={label}
        className={clsx(
          "w-[22px] h-[22px] flex items-center justify-center rounded",
          label === "정보 조회" && "border border-[#bcbcbc] bg-[#ececec]"
        )}
      >
        <Icon d={d} size={16}>
          {text === "AUTO" && (
            <text x="8" y="14" textAnchor="middle" fontSize="6" fontWeight="bold" fill="currentColor" stroke="none">
              AUTO
            </text>
          )}
          {text === "All" && (
            <text x="1" y="7" fontSize="8" fill="currentColor" stroke="none">
              All
            </text>
          )}
          {label === "봉" && <path d="M2.500 6h4v5h-4zM9.500 5h4v5h-4z" fill="currentColor" />}
        </Icon>
      </button>
    ))}
  </nav>
);

const App = () => (
  <div className="min-h-screen flex flex-col bg-[#dcdbd5] border-l border-b border-[#606060] font-['Liberation_Sans','Noto_Sans_CJK_KR',sans-serif]">
    <div className="h-[2px] bg-[#e8e8ec] border-b border-[#808080]" />
    <div className="flex-1 flex">
      <div className="flex-1 min-w-0 flex flex-col">
        <TitleBar />
        <Toolbar />
        <div className="flex-1 flex gap-[6px] px-[6px] pb-[6px]">
          <Sidebar />
          <main className="flex-1 min-w-0 self-start border border-[#c3c3c3] bg-white">
            <QuoteBar />
            <PricePane />
            <VolumePane />
            <RsiPane />
            <TimeAxis />
            <BottomBar />
          </main>
          <SideTools />
        </div>
      </div>
      <div className="w-[5px] bg-[#c0c4c8] border-l border-l-[#606060] border-r-2 border-r-[#0a8c46]" />
    </div>
  </div>
);

export default App;
